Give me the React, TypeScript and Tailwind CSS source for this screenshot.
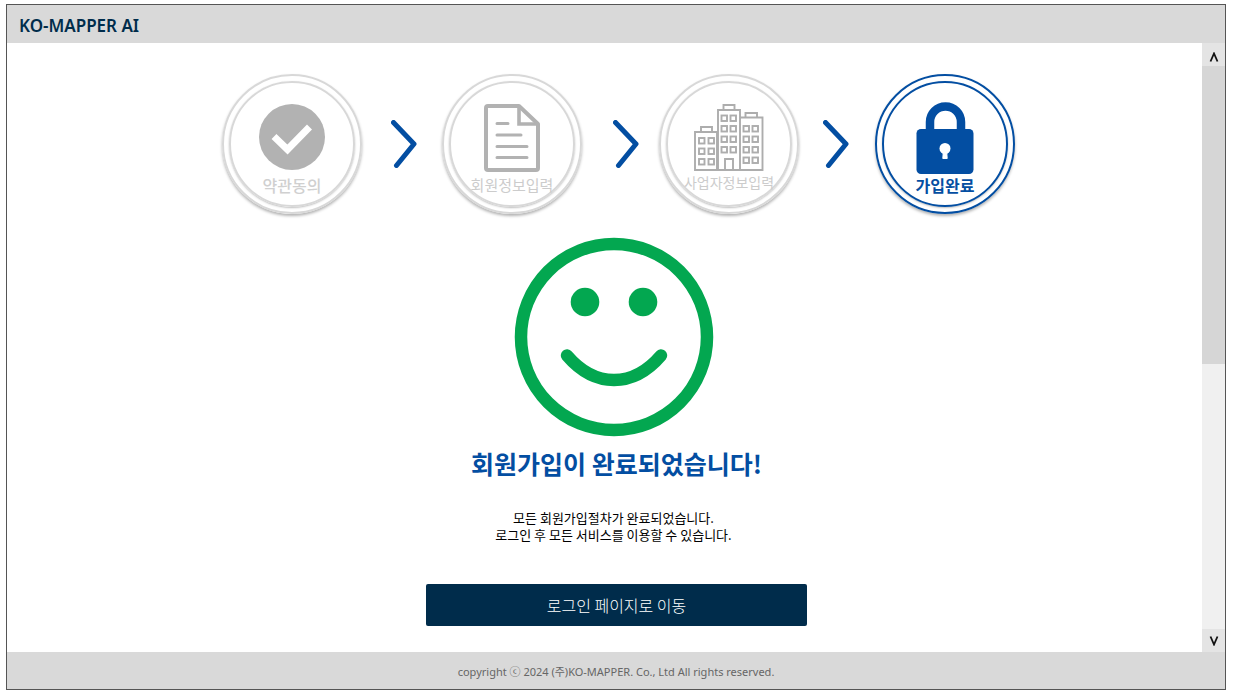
import type { ReactNode } from "react";

function CheckIcon() {
  return (
    <svg width="66" height="66" viewBox="0 0 66 66" aria-hidden="true">
      <circle cx="33" cy="33" r="33" fill="#b2b2b2" />
      <path d="M15 32.500L28.500 45.500L50.500 23" fill="none" stroke="#fff" strokeWidth="7" />
    </svg>
  );
}

function DocumentIcon() {
  return (
    <svg width="56" height="68" viewBox="0 0 56 68" aria-hidden="true" fill="none" stroke="#b2b2b2">
      <path d="M35 2 H4 Q2 2 2 4 V64 Q2 66 4 66 H52 Q54 66 54 64 V20 Z" strokeWidth="4" strokeLinejoin="round" />
      <path d="M35 2 V20 H54" strokeWidth="3.6" />
      <path d="M13 19.500H24M13 31H37M13 42.500H43M13 53.500H43" strokeWidth="3" strokeLinecap="round" />
    </svg>
  );
}

const WINDOWS = [
  [5, 36.500], [14.500, 36.500], [5, 47], [14.500, 47], [5, 57.500], [14.500, 57.500],
  [27.500, 14], [36.500, 14], [27.500, 24.500], [36.500, 24.500],
  [27.500, 35], [36.500, 35], [27.500, 45.500], [36.500, 45.500],
  [49.500, 24.500], [58.500, 24.500], [49.500, 35], [58.500, 35],
  [49.500, 45.500], [58.500, 45.500], [49.500, 56], [58.500, 56],
];

function BuildingsIcon() {
  return (
    <svg width="70" height="68" viewBox="0 0 70 68" aria-hidden="true" fill="none" stroke="#adadad" strokeWidth="1.9">
      <path d="M1 66V28H23V66ZM24 66V6H46V66ZM46 66V13.500H68.500V66Z" />
      <path d="M7 28V23H18V28M29.500 6V1H40.500V6M51.500 13.500V9H63V13.500" />
      <path d="M31 66V55H39V66" />
      {WINDOWS.map(([x, y]) => (
        <rect key={`${x}-${y}`} x={x} y={y - 2.5} width="5.5" height="5.5" />
      ))}
    </svg>
  );
}

function LockIcon() {
  return (
    <svg width="58" height="72" viewBox="0 0 58 72" aria-hidden="true" className="overflow-visible">
      <path d="M14 31V18A15.500 15.500 0 0 1 45 18V31" fill="none" stroke="#034ea2" strokeWidth="8.500" />
      <rect x="0.5" y="25" width="57" height="45" rx="4.500" fill="#034ea2" />
      <circle cx="29" cy="44.500" r="5.500" fill="#fff" />
      <path d="M27.500 45H30.500L31.200 54.500H26.800Z" fill="#fff" stroke="#fff" strokeLinejoin="round" />
    </svg>
  );
}

function Arrow({ className }: { className: string }) {
  return (
    <svg width="26" height="48" viewBox="0 0 26 48" aria-hidden="true" className={`shrink-0 ${className}`}>
      <path d="M2.500 2.500L23 24L5.500 45.500" fill="none" stroke="#034ea2" strokeWidth="5" strokeLinecap="round" strokeLinejoin="round" />
    </svg>
  );
}

type StepProps = { label: string; labelClass: string; active?: boolean; children: ReactNode };

function Step({ label, labelClass, active = false, children }: StepProps) {
  const ring = active ? "border-[#034ea2]" : "border-[#d8d8d8]";
  return (
    <li
      aria-current={active ? "step" : undefined}
      className={`flex size-[140px] shrink-0 rounded-full border-2 p-[5px] shadow-[0_2px_3px_rgba(0,0,0,0.3)] ${ring}`}
    >
      <div
        className={`flex min-w-0 flex-1 flex-col items-center rounded-full border-2 pt-[21px] shadow-[0_1px_2px_rgba(0,0,0,0.25)] ${ring}`}
      >
        <div className="flex h-[70px] shrink-0 items-start">{children}</div>
        <span className={`whitespace-nowrap ${labelClass}`}>{label}</span>
      </div>
    </li>
  );
}

function Smiley() {
  return (
    <svg width="200" height="200" viewBox="0 0 200 200" role="img" aria-label="smile" fill="#03a750">
      <circle cx="100" cy="100" r="93" fill="none" stroke="#03a750" strokeWidth="12.500" />
      <circle cx="71" cy="65" r="14.300" />
      <circle cx="129" cy="65" r="14.300" />
      <path d="M53 118.500Q74 143 100 143Q126 143 147 118.500" fill="none" stroke="#03a750" strokeWidth="12.500" strokeLinecap="round" />
    </svg>
  );
}

function ScrollRail() {
  return (
    <div className="flex w-[23px] shrink-0 flex-col bg-[#f0f0f0]">
      <button type="button" aria-label="위로" className="flex h-[23px] items-center justify-center bg-[#e4e4e4] pt-1">
        <svg width="10" height="10" viewBox="0 0 10 10">
          <path d="M1.500 9.500L5 1.500L8.500 9.500" fill="none" stroke="#111" strokeWidth="1.800" />
        </svg>
      </button>
      <div className="flex-1">
        <div className="h-[53%] bg-[#d6d6d6]" />
      </div>
      <button type="button" aria-label="아래로" className="flex h-[23px] items-center justify-center bg-[#e4e4e4]">
        <svg width="10" height="10" viewBox="0 0 10 10">
          <path d="M1.500 0.500L5 8.500L8.500 0.500" fill="none" stroke="#111" strokeWidth="1.800" />
        </svg>
      </button>
    </div>
  );
}

export default function App() {
  return (
    <div className="flex min-h-screen flex-col bg-white pt-1 pr-[7px] pb-2 pl-[6px] font-['Noto_Sans_CJK_KR',sans-serif]">
      <div className="flex flex-1 flex-col border border-[#555]">
        <header className="flex h-[38px] items-center bg-[#d9d9d9] px-3 pt-1">
          <h1 className="font-['Noto_Sans','Noto_Sans_CJK_KR',sans-serif] text-[17px] font-semibold text-[#002c4b]">
            KO-MAPPER AI
          </h1>
        </header>

        <div className="flex flex-1">
          <main className="flex flex-1 flex-col items-center pt-[31px] pb-6 pl-6">
            <ol className="flex items-center pl-1">
              <Step label="약관동의" labelClass="text-base leading-[22px] font-medium text-[#d0d0d0]">
                <CheckIcon />
              </Step>
              <Arrow className="mr-[25px] ml-[29px]" />
              <Step label="회원정보입력" labelClass="text-[15px] leading-[22px] text-[#cccccc]">
                <DocumentIcon />
              </Step>
              <Arrow className="mr-5 ml-[31px]" />
              <Step label="사업자정보입력" labelClass="text-sm leading-4 text-[#cccccc]">
                <BuildingsIcon />
              </Step>
              <Arrow className="mr-[26px] ml-6" />
              <Step active label="가입완료" labelClass="text-base leading-[22px] font-bold text-[#034ea2]">
                <LockIcon />
              </Step>
            </ol>

            <div className="mt-[23px] pr-[6px]">
              <Smiley />
            </div>
            <h2 className="mt-2 text-[25px] leading-9 font-bold text-[#034ea2]">회원가입이 완료되었습니다!</h2>
            <p className="mt-7 pr-[6px] text-center text-[13px] leading-[17px] text-black">
              모든 회원가입절차가 완료되었습니다.
              <br />
              로그인 후 모든 서비스를 이용할 수 있습니다.
            </p>
            <button
              type="button"
              className="mt-[41px] h-[42px] w-[381px] rounded-xs bg-[#002c4b] text-base font-light text-white"
            >
              로그인 페이지로 이동
            </button>
          </main>
          <ScrollRail />
        </div>

        <footer className="flex h-[37px] items-center justify-center bg-[#d9d9d9] pt-1 font-['Noto_Sans','Noto_Sans_CJK_KR',sans-serif] text-[11px] text-[#666]">
          copyright ⓒ 2024 (주)KO-MAPPER. Co., Ltd All rights reserved.
        </footer>
      </div>
    </div>
  );
}
